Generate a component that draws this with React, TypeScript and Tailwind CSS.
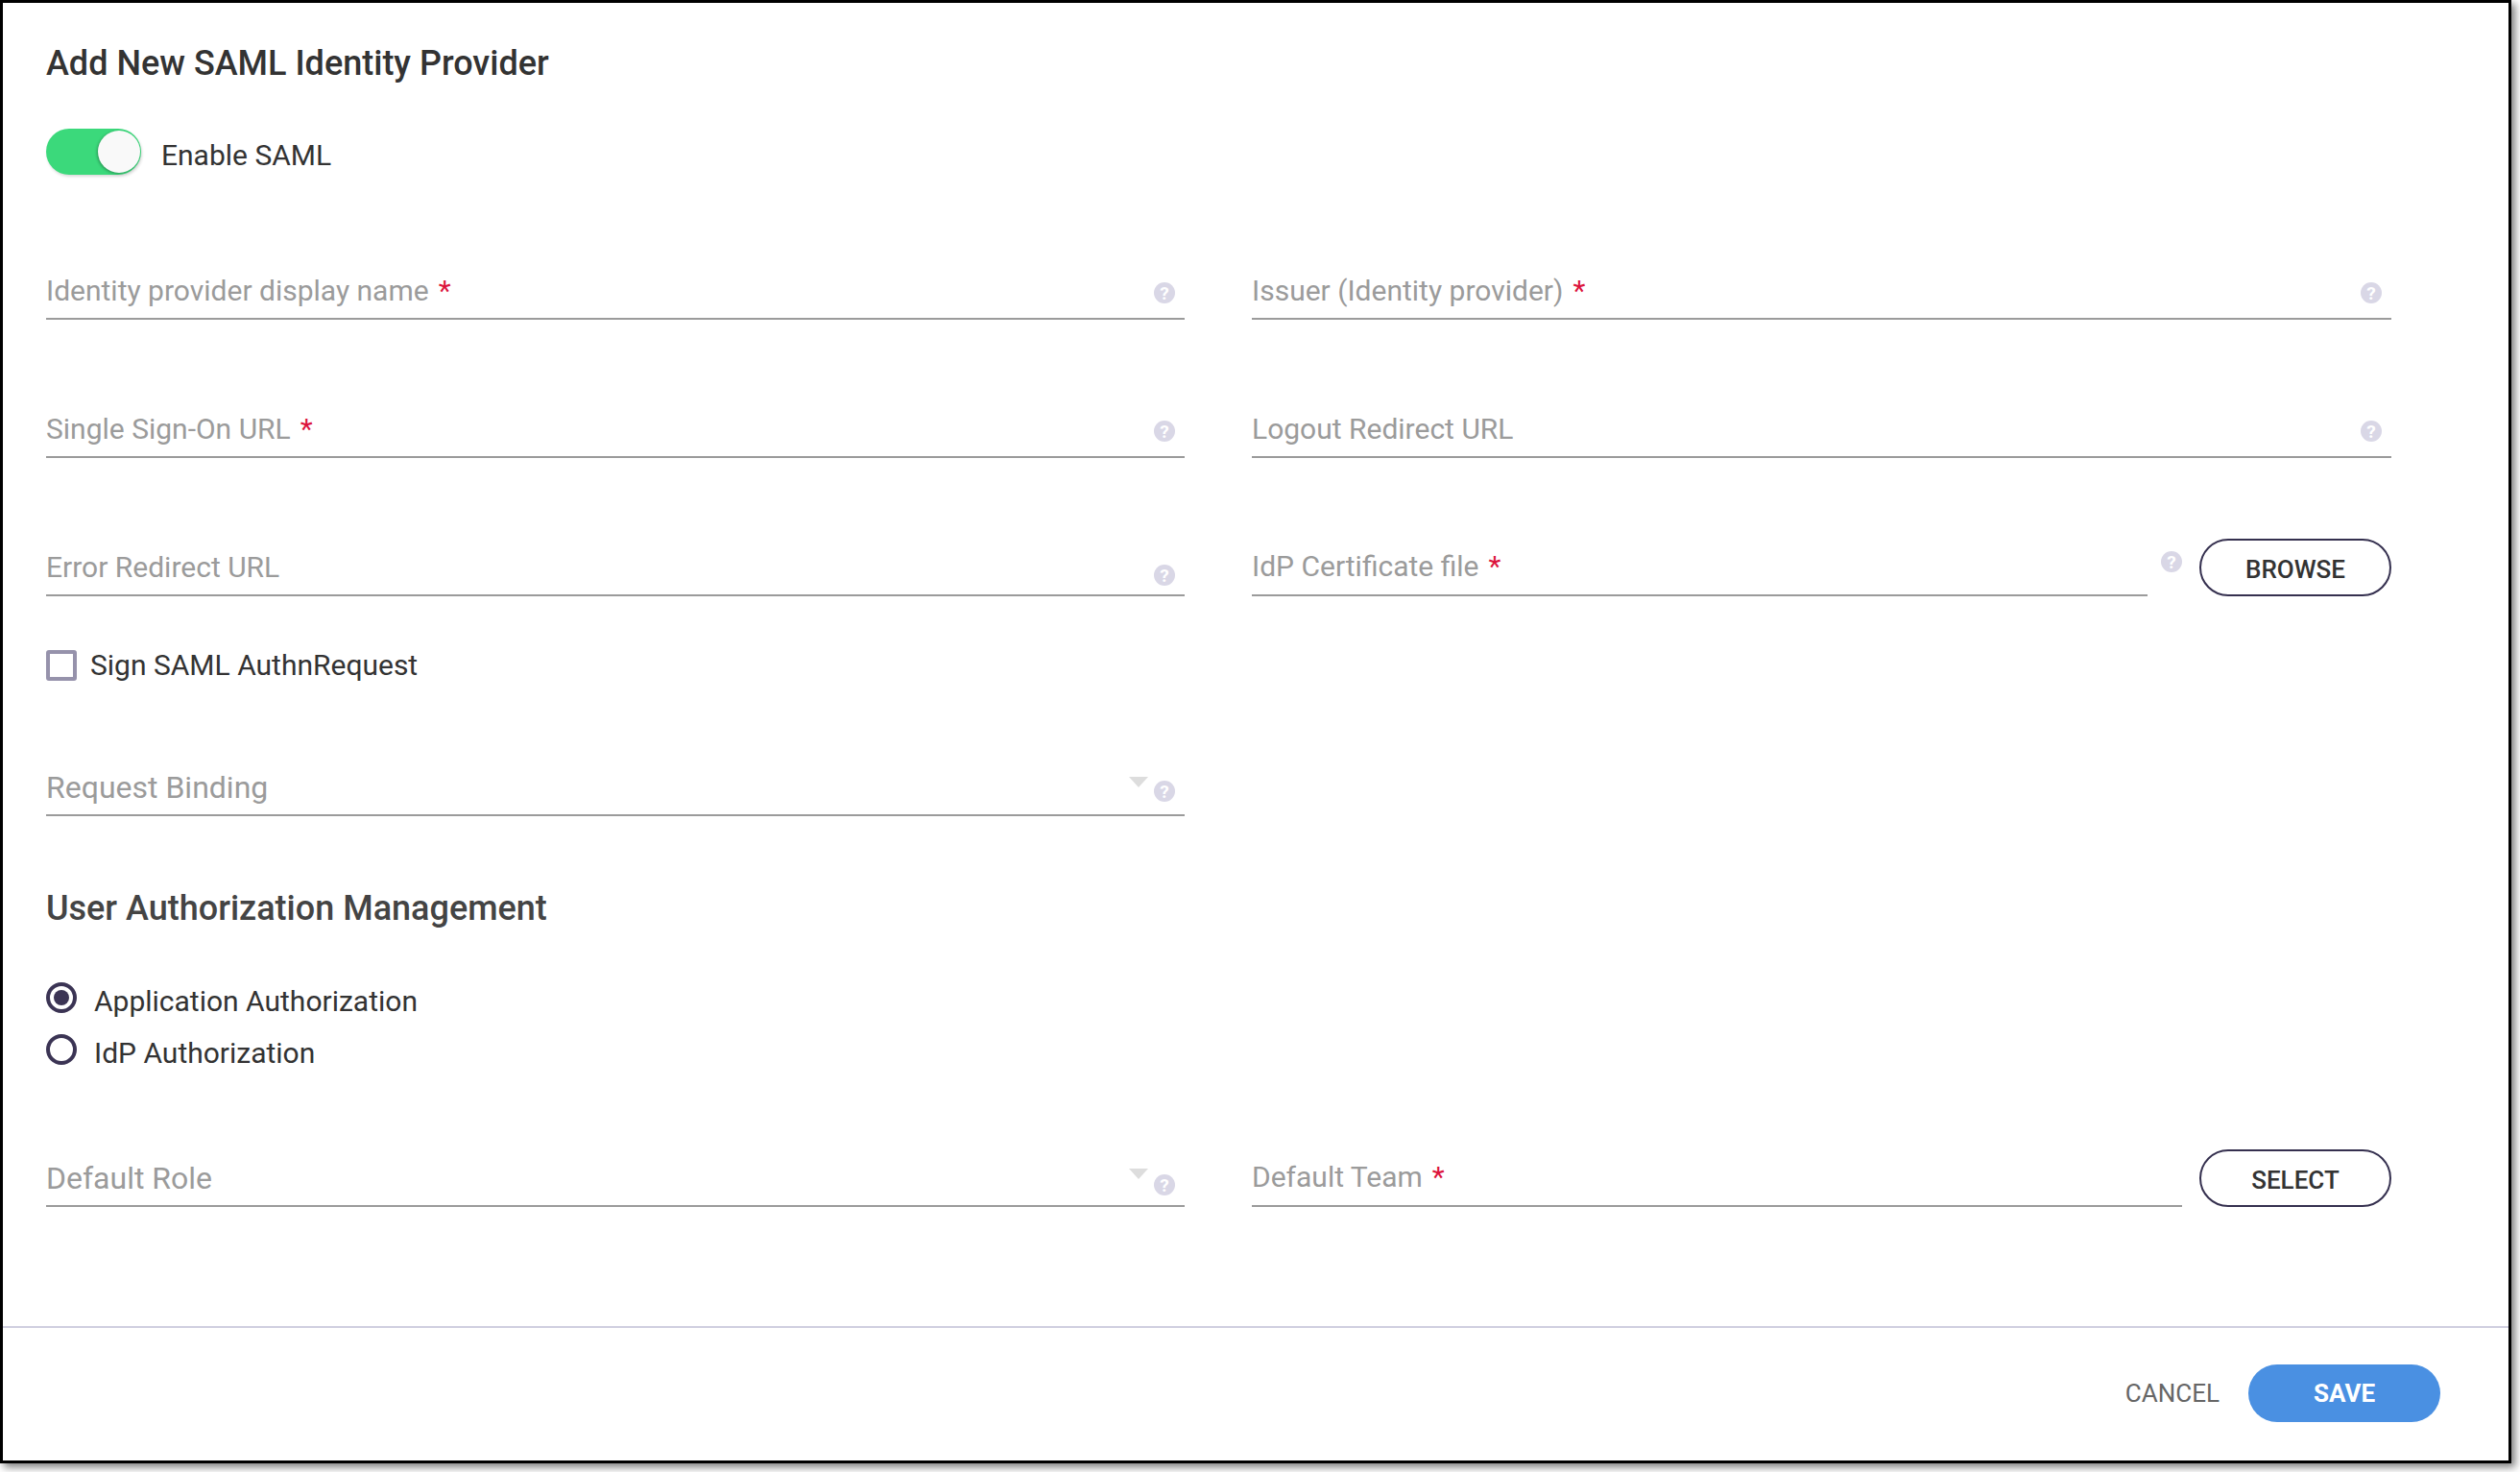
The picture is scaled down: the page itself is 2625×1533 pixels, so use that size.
import React from "react";

const font = "font-['Roboto',sans-serif]";

const Help = ({ className = "mt-[21px]" }: { className?: string }) => (
  <div
    className={`flex h-[22px] w-[22px] shrink-0 items-center justify-center rounded-full bg-[#d9d7e6] text-[19px] leading-none font-bold text-white ${className}`}
  >
    ?
  </div>
);

const Field = ({
  label,
  required,
  helpClass,
  arrowClass,
  labelClass = "mt-[12px] text-[30px]",
  className = "",
}: {
  label: string;
  required?: boolean;
  helpClass?: string;
  arrowClass?: string;
  labelClass?: string;
  className?: string;
}) => (
  <div className={`flex h-[60px] border-b-2 border-[#9b9b9b] pr-[10px] ${className}`}>
    <div className={`h-[36px] flex-1 leading-[36px] text-[#9b9b9b] ${labelClass}`}>
      {label}
      {required && <span className="ml-[10px] text-[#dc143c]">*</span>}
    </div>
    {arrowClass && (
      <div className={`mr-[6px] h-0 w-0 border-x-[10px] border-t-[11px] border-x-transparent border-t-[#dddddd] ${arrowClass}`} />
    )}
    <Help className={helpClass} />
  </div>
);

const PillButton = ({ children }: { children: React.ReactNode }) => (
  <button className="h-[60px] w-[200px] shrink-0 rounded-full border-2 border-[#35304f] bg-white pt-[4px] text-[26px] font-medium text-[#333333]">
    {children}
  </button>
);

const Radio = ({ checked, label }: { checked?: boolean; label: string }) => (
  <div className="flex h-[32px] items-start">
    <div className="flex h-[32px] w-[32px] items-center justify-center rounded-full border-[4px] border-[#3b3454]">
      {checked && <div className="h-[16px] w-[16px] rounded-full bg-[#3b3454]" />}
    </div>
    <span className="mt-[2px] ml-[18px] text-[30px] leading-[36px] text-[#333333]">{label}</span>
  </div>
);

export default function App() {
  return (
    <div className={`h-[1533px] w-[2625px] bg-white ${font}`}>
      <div className="flex h-[1524px] w-[2616px] flex-col border-[3px] border-black bg-white shadow-[4px_4px_8px_rgba(0,0,0,0.5)]">
        <div className="h-[1378px] pt-[43px] pl-[45px]">
          <h1 className="h-[40px] text-[36px] leading-[40px] font-medium text-[#333333]">
            Add New SAML Identity Provider
          </h1>

          <div className="mt-[48px] flex h-[48px] items-center">
            <div className="flex h-[48px] w-[99px] items-center justify-end rounded-full bg-[#3bd97b] pr-[1px] shadow-[1px_2px_3px_rgba(0,0,0,0.15)]">
              <div className="h-[44px] w-[44px] rounded-full bg-[#f9f9f9] shadow-[-1px_1px_3px_rgba(0,0,0,0.3)]" />
            </div>
            <span className="mt-[6px] ml-[21px] text-[30px] text-[#333333]">Enable SAML</span>
          </div>

          <div className="mt-[91px] grid w-[2443px] grid-cols-[1186px_1187px] gap-x-[70px] gap-y-[84px]">
            <Field label="Identity provider display name" required />
            <Field label="Issuer (Identity provider)" required />
            <Field label="Single Sign-On URL" required />
            <Field label="Logout Redirect URL" />
            <Field label="Error Redirect URL" helpClass="mt-[27px]" />
            <div className="flex items-start">
              <Field
                label="IdP Certificate file"
                required
                helpClass="hidden"
                labelClass="mt-[11px] text-[30px]"
                className="flex-1"
              />
              <Help className="mt-[13px] ml-[14px]" />
              <div className="ml-[18px]">
                <PillButton>BROWSE</PillButton>
              </div>
            </div>
          </div>

          <div className="mt-[56px] flex h-[32px] w-[1186px] items-center">
            <div className="h-[32px] w-[32px] rounded-[3px] border-[4px] border-[#9692ab]" />
            <span className="ml-[14px] text-[30px] leading-[36px] text-[#333333]">Sign SAML AuthnRequest</span>
          </div>

          <div className="mt-[81px] w-[1186px]">
            <Field
              label="Request Binding"
              arrowClass="mt-[19px]"
              helpClass="mt-[23px]"
              labelClass="mt-[12px] text-[32px]"
            />
          </div>

          <h2 className="mt-[76px] h-[40px] text-[36px] leading-[40px] font-medium text-[#444444]">
            User Authorization Management
          </h2>

          <div className="mt-[57px] flex flex-col gap-[22px]">
            <Radio checked label="Application Authorization" />
            <Radio label="IdP Authorization" />
          </div>

          <div className="mt-[88px] grid w-[2443px] grid-cols-[1186px_1187px] gap-x-[70px]">
            <Field
              label="Default Role"
              arrowClass="mt-[20px]"
              helpClass="mt-[26px]"
              labelClass="mt-[12px] text-[32px]"
            />
            <div className="flex items-start">
              <Field
                label="Default Team"
                required
                helpClass="hidden"
                labelClass="mt-[11px] text-[30px]"
                className="flex-1"
              />
              <div className="ml-[18px]">
                <PillButton>SELECT</PillButton>
              </div>
            </div>
          </div>
        </div>

        <div className="flex h-[140px] items-start justify-end border-t-2 border-[#d0cfe0] pt-[38px] pr-[71px]">
          <span className="mt-[15px] mr-[30px] text-[26px] leading-[30px] text-[#666666]">CANCEL</span>
          <button className="h-[60px] w-[200px] rounded-full bg-[#4a90e2] text-[26px] font-bold text-white">
            SAVE
          </button>
        </div>
      </div>
    </div>
  );
}
